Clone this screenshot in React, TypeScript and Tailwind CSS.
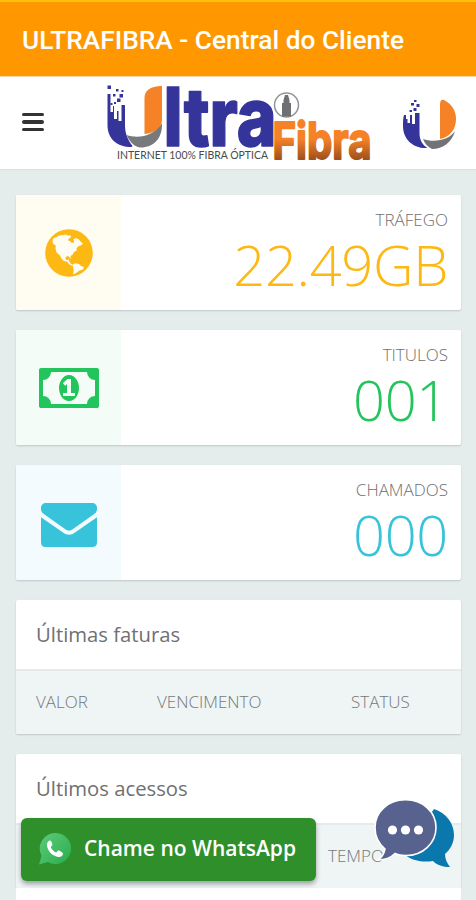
import type { ReactNode } from "react";
import { clsx } from "clsx";

const GlobeIcon = () => (
  <svg viewBox="0 0 48 48" className="h-12 w-12">
    <circle cx="24" cy="24" r="23.8" fill="#fdb813" />
    <g fill="#fffcf1">
      <path d="M7.500 13 8 9.500 11.500 8 14 6.500 18.500 6 21 5.500 22.500 6.500 26 6.500 25.800 8.500 24 9.500 22.800 11.300 25 12 26.500 13.700 28.700 13.800 29 12 28.500 10.200 30.500 9 33.500 10 35.500 12.500 38 14.500 36.500 16 33 17.500 31.500 19.500 31.800 21.500 29 23 27.800 25.500 25.500 27 25.800 30 24.500 28.300 22.500 26.800 20.500 28.500 20.500 30.500 22.500 31 24 30 23.800 32.200 25 33 25.800 35 28.500 36 27.500 37 24.500 35.500 22 32.800 18.500 31.800 16.500 29.500 15 26.500 11.500 23.500 10.500 19.500 10.800 16.500 8.500 15.200Z" />
      <path d="m28 35.500 2-1.300 4 .8 2 2 3 1-1 2.500-3.500 1-2 1.500-2.500 1.800-2 .2.700-3.500-.7-3Z" />
    </g>
  </svg>
);

const MoneyIcon = () => (
  <svg viewBox="0 256 1920 1280" className="h-10 w-15" fill="#22c55b">
    <path d="M768 1152h384v-96h-128v-448h-114l-148 137 77 80q42-37 55-57h2v288h-128v96zm512-256q0 70-21 142t-59.500 134-101.500 101-138 39-138-39-101.500-101-59.500-134-21-142 21-142 59.500-134 101.500-101 138-39 138 39 101.500 101 59.500 134 21 142zm512 256v-512q-106 0-181-75t-75-181h-1152q0 106-75 181t-181 75v512q106 0 181 75t75 181h1152q0-106 75-181t181-75zm128-832v1152q0 26-19 45t-45 19h-1792q-26 0-45-19t-19-45v-1152q0-26 19-45t45-19h1792q26 0 45 19t19 45z" />
  </svg>
);

const EnvelopeIcon = () => (
  <svg viewBox="0 0 56 44" className="h-11 w-14 translate-y-0.5" fill="#37c3da">
    <path d="M5 0h46c3 0 5 2 5 5v1c0 2.500-1.500 4-3.500 5.500L32 26c-3 2-5 2-8 0L3.500 11.500C1.500 10 0 8.500 0 6V5c0-3 2-5 5-5Z" />
    <path d="M0 14.200 22 29.500c4 3 8 3 12 0L56 14.200V39.500c0 3-2 4.500-4.500 4.500h-47C2 44 0 42.500 0 39.500Z" />
  </svg>
);

const Logo = () => (
  <svg viewBox="0 0 270 84" className="h-21 w-[270px] overflow-visible">
    <defs>
      <linearGradient id="fibra" gradientUnits="userSpaceOnUse" x1="0" y1="36" x2="0" y2="80">
        <stop offset="0.5" stopColor="#f58227" />
        <stop offset="1" stopColor="#984c1d" />
      </linearGradient>
    </defs>

    {/* U mark */}
    <path fill="#34349a" d="M2.500 13h3v18h2.500v-6h1v13h3v-8h1.500v10h3V24h3.500v20c0 9 3 15 7.500 21l-1 1C12 66 2.500 58 2.500 44Z" />
    <path fill="#34349a" d="M2.500 4.500h3.500v3.500H2.500zM11 8h2.500v2.500H11zM14.500 13h3.500v3.500h-3.500zM8 13h2.500v2.500H8zM12 17.500h3.500v3.500H12zM9 21h2v2H9zM16.500 9h2v2h-2zM5.500 22h2v2h-2z" />
    <path fill="#f58227" d="M39.500 53V17c0-7 5-12 17.500-12v34c0 8-7 13-17.500 14Z" />
    <path fill="#77797c" d="M21.500 54c12 4 27 1 35.500-11.500C57.500 58 48 66.500 36 66.500c-6 0-11-5-14.500-12.500Z" />

    <text
      y="65"
      fontSize="81"
      fontWeight="800"
      fontFamily="Inter, sans-serif"
      fill="#34349a"
      stroke="#34349a"
      strokeWidth="1.500"
      strokeLinejoin="round"
      textLength="113"
      lengthAdjust="spacingAndGlyphs"
      x="58.500"
    >
      ltra
    </text>
    <text
      x="12"
      y="78"
      fontSize="10.500"
      fontFamily="Lato, sans-serif"
      fill="#4a4a4a"
      textLength="151"
      lengthAdjust="spacingAndGlyphs"
    >
      INTERNET 100% FIBRA ÓPTICA
    </text>

    {/* lighthouse badge */}
    <circle cx="181.500" cy="24" r="12" fill="#fff" stroke="#929497" strokeWidth="1.500" />
    <path fill="#6d6f73" d="M180 14h3l1.500 5v3h1.500v13.500h-9V22h1.500v-3Z" />

    <text
      x="167.500"
      y="78"
      fontSize="51"
      fontWeight="700"
      fontFamily="Inter, sans-serif"
      fill="url(#fibra)"
      stroke="url(#fibra)"
      strokeWidth="2"
      strokeLinejoin="round"
      textLength="99"
      lengthAdjust="spacingAndGlyphs"
    >
      Fibra
    </text>
  </svg>
);

const RoundLogo = () => (
  <svg viewBox="0 0 54 50" className="h-[50px] w-[54px]">
    <path fill="#34349a" d="M1 16h2v4h1.500v4H7v-8h2v9h3V14h4.500v20c0 7 3 12 8 15C10 50 0 40 0 27c0-4 0-8 1-11Z" />
    <path fill="#34349a" d="M11 1h2.500v2H11zM8 4h3v2.500H8zM13.500 5h3v3h-3zM10.500 9h3v3h-3zM6.500 11h2.500v2H6.500z" />
    <path fill="#f58227" d="M37 40V6c0-4 1-6 4-5 8 4 12 11 12 19 0 10-6 18-16 20Z" />
    <path fill="#717376" d="M20 40c12 4 26 1 32-8-3 11-12 18-23 18-4-2-7-5-9-10Z" />
  </svg>
);

const WhatsAppIcon = () => (
  <svg viewBox="0 0 32 32" className="h-8 w-8">
    <defs>
      <linearGradient id="wa" x1="0" y1="0" x2="1" y2="1">
        <stop offset="0" stopColor="#5fca7c" />
        <stop offset="1" stopColor="#29ad4b" />
      </linearGradient>
    </defs>
    <path fill="url(#wa)" d="M16.500 0a15.500 15.500 0 1 1-7.500 29L0 31.500l2.500-8.700A15.500 15.500 0 0 1 16.500 0Z" />
    <path
      fill="#fff"
      d="M10.500 7.500c-2 1-3 3-2.500 5.500 1 5.500 6 10.500 11.500 11 2 .2 4.500-1 4.500-3.500 0-1-4-3.500-5-3l-1.700 2c-2.500-.8-4.800-3.200-5.600-5.500l1.600-1.800c.3-1-.8-5-2.800-4.700Z"
    />
  </svg>
);

const ChatIcon = () => (
  <svg viewBox="0 0 82 72" className="h-[72px] w-[82px]">
    <path
      fill="#0a78ad"
      d="M60 10c12 4 20 14 20 26 0 8-4 15-9 19 0 5 2 9 5 13-7 0-13-2-17-6-12 2-23-1-30-8Z"
    />
    <path
      fill="#57628f"
      stroke="#fff"
      strokeWidth="1.600"
      d="M31.500 .8C49 .8 62 13 62 28.500S49 56.500 32 56.500c-4 0-8-.5-11-2-4 4-10 6.500-17 6.500 4-3 6-6 7-11C5 45 1 37 1 28.500 1 13 14 .8 31.500 .8Z"
    />
    <g fill="#fff">
      <circle cx="18.500" cy="31" r="4.600" />
      <circle cx="31.500" cy="31" r="4.600" />
      <circle cx="44.500" cy="31" r="4.600" />
    </g>
  </svg>
);

interface StatCardProps {
  label: string;
  value: string;
  icon: ReactNode;
  tint: string;
  color: string;
}

const StatCard = ({ label, value, icon, tint, color }: StatCardProps) => (
  <div className="flex h-[115px] overflow-hidden rounded-xs bg-white shadow-[0_1px_2px_rgba(0,0,0,0.16)]">
    <div className={clsx("flex w-[105px] items-center justify-center", tint)}>
      {icon}
    </div>
    <div className="flex-1 pt-[13px] pr-[13px] text-right">
      <p className="text-[17px] leading-6 font-light text-[#707070]">{label}</p>
      <p className={clsx("text-[56px] leading-16 font-light tracking-[-0.3px]", color)}>
        {value}
      </p>
    </div>
  </div>
);

interface PanelProps {
  title: string;
  children: ReactNode;
}

const Panel = ({ title, children }: PanelProps) => (
  <div className="overflow-hidden rounded-xs bg-white shadow-[0_1px_2px_rgba(0,0,0,0.16)]">
    <h2 className="flex h-[69px] items-center px-5 text-[20.3px] text-[#707070]">
      {title}
    </h2>
    <div className="flex h-[65px] items-center border-t-2 border-[#e6eaea] bg-[#eff4f5] px-5 pb-px text-[17px] font-light text-[#757979]">
      {children}
    </div>
  </div>
);

const App = () => {
  return (
    <div className="relative h-[900px] w-[476px] overflow-hidden bg-[#e4ecec] font-['Open_Sans',sans-serif]">
      {/* Title bar */}
      <header className="flex h-[76px] items-center border-t-2 border-[#ffc107] bg-[#ff9800] px-[22px] pt-[3px] font-[Roboto,sans-serif] text-[26.3px] font-medium text-white">
        <span className="whitespace-nowrap">ULTRAFIBRA - Central do Cliente</span>
      </header>

      {/* Navbar */}
      <nav className="flex h-[94px] items-center border-t border-b border-t-[#f4d4a8] border-b-[#d9e0e0] bg-white pl-[22px]">
        <button className="flex w-[22px] flex-col gap-1 pb-0.5" aria-label="Menu">
          <span className="h-[3.500px] rounded-full bg-[#333]" />
          <span className="h-[3.500px] rounded-full bg-[#333]" />
          <span className="h-[3.500px] rounded-full bg-[#333]" />
        </button>
        <div className="ml-[61px]">
          <Logo />
        </div>
        <div className="ml-[28px] pt-0.5">
          <RoundLogo />
        </div>
      </nav>

      <main className="flex flex-col gap-5 pt-[25px] pr-[15px] pl-4">
        <StatCard label="TRÁFEGO" value="22.49GB" icon={<GlobeIcon />} tint="bg-[#fffcf1]" color="text-[#fdb813]" />
        <StatCard label="TITULOS" value="001" icon={<MoneyIcon />} tint="bg-[#f4fcf7]" color="text-[#22c55b]" />
        <StatCard label="CHAMADOS" value="000" icon={<EnvelopeIcon />} tint="bg-[#f4fbfe]" color="text-[#37c3da]" />

        <Panel title="Últimas faturas">
          <span className="w-[121px]">VALOR</span>
          <span className="w-[194px]">VENCIMENTO</span>
          <span>STATUS</span>
        </Panel>

        <div className="h-[180px]">
          <Panel title="Últimos acessos">
            <span className="pl-[292px]">TEMPO</span>
          </Panel>
          <div className="h-10 bg-white" />
        </div>
      </main>

      {/* Floating buttons */}
      <button className="absolute top-[818px] left-[21px] flex h-[63px] w-[295px] items-center gap-[13px] rounded-md bg-[#2f8f2a] pb-0.5 pl-[18px] text-[21px] font-semibold text-white shadow-[0_3px_5px_rgba(0,0,0,0.35)]">
        <WhatsAppIcon />
        <span className="whitespace-nowrap">Chame no WhatsApp</span>
      </button>
      <div className="absolute top-[799px] left-[374px]">
        <ChatIcon />
      </div>
    </div>
  );
};

export default App;
